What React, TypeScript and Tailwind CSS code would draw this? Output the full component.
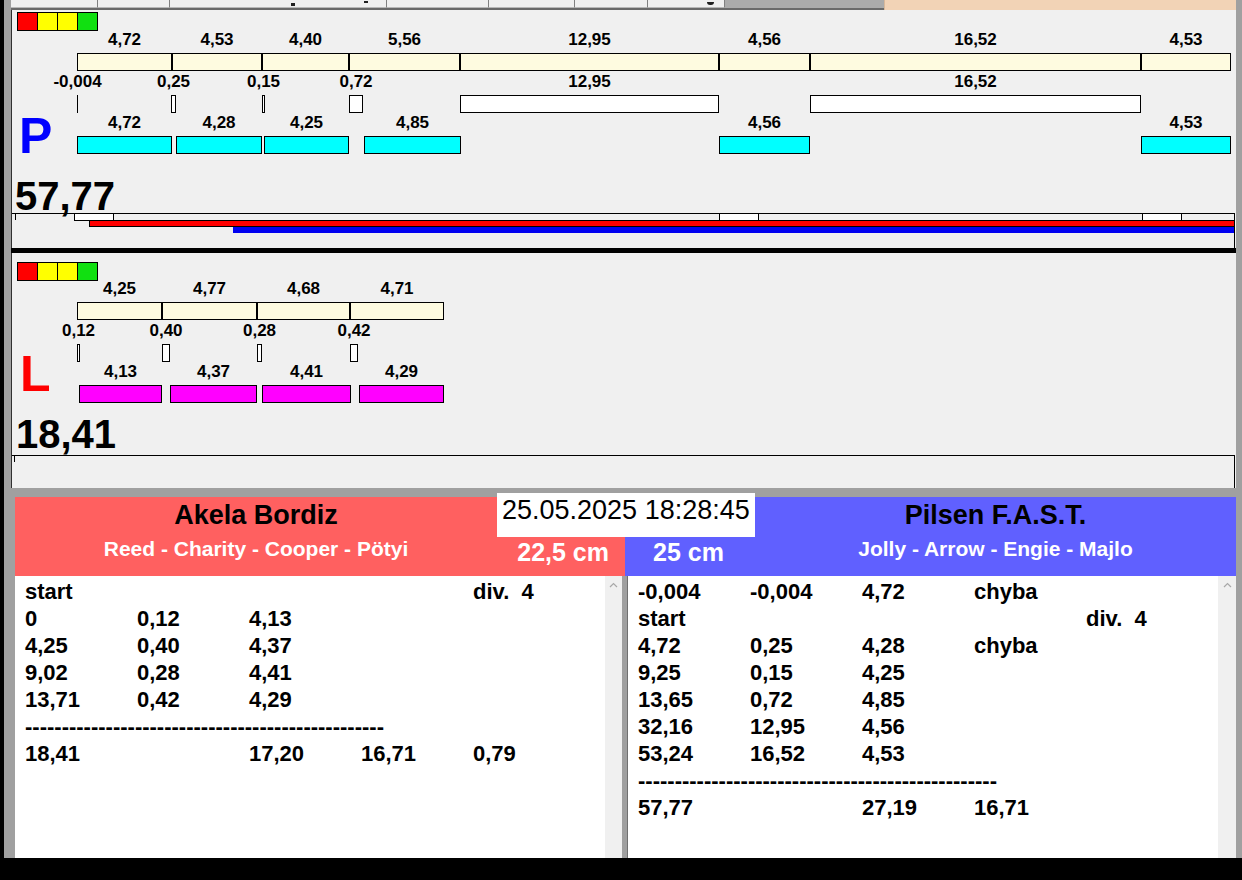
import React from 'react';

// chart coordinates are page pixels; panels start at x=12
const OX = 12;

type Seg = [number, number, string];

const pRow1: Seg[] = [
  [77, 172, '4,72'], [172, 262, '4,53'], [262, 349, '4,40'], [349, 460, '5,56'],
  [460, 719, '12,95'], [719, 810, '4,56'], [810, 1141, '16,52'], [1141, 1231, '4,53'],
];
const pRow2: Seg[] = [
  [77, 78, '-0,004'], [171, 176, '0,25'], [262, 265, '0,15'], [349, 363, '0,72'],
  [460, 719, '12,95'], [810, 1141, '16,52'],
];
const pRow3: Seg[] = [
  [77, 172, '4,72'], [176, 262, '4,28'], [264, 349, '4,25'], [364, 461, '4,85'],
  [719, 810, '4,56'], [1141, 1231, '4,53'],
];

const lRow1: Seg[] = [[77, 162, '4,25'], [162, 257, '4,77'], [257, 350, '4,68'], [350, 444, '4,71']];
const lRow2: Seg[] = [[77, 80, '0,12'], [162, 170, '0,40'], [257, 262, '0,28'], [350, 358, '0,42']];
const lRow3: Seg[] = [[79, 162, '4,13'], [170, 257, '4,37'], [262, 351, '4,41'], [359, 444, '4,29']];

const DASH = '-------------------------------------------------';

const leftRows: string[][] = [
  ['start', '', '', '', 'div.  4'],
  ['0', '0,12', '4,13'],
  ['4,25', '0,40', '4,37'],
  ['9,02', '0,28', '4,41'],
  ['13,71', '0,42', '4,29'],
  [DASH],
  ['18,41', '', '17,20', '16,71', '0,79'],
];

const rightRows: string[][] = [
  ['-0,004', '-0,004', '4,72', 'chyba'],
  ['start', '', '', '', 'div.  4'],
  ['4,72', '0,25', '4,28', 'chyba'],
  ['9,25', '0,15', '4,25'],
  ['13,65', '0,72', '4,85'],
  ['32,16', '12,95', '4,56'],
  ['53,24', '16,52', '4,53'],
  [DASH],
  ['57,77', '', '27,19', '16,71'],
];

function BarRow({ top, segs, fill }: { top: number; segs: Seg[]; fill: string }) {
  return (
    <>
      {segs.map(([x0, x1, label], i) => {
        const w = x1 - x0;
        const c = (x0 + x1) / 2 - OX;
        return (
          <React.Fragment key={i}>
            <div
              className="absolute w-[100px] text-center text-[17px] font-bold leading-[20px] text-black whitespace-nowrap"
              style={{ left: c - 50, top: top - 23 }}
            >
              {label}
            </div>
            <div
              className={`absolute h-[18px] ${w <= 1 ? 'bg-black' : 'border border-black ' + fill}`}
              style={{ left: x0 - OX, width: w, top }}
            />
          </React.Fragment>
        );
      })}
    </>
  );
}

function Lights({ top }: { top: number }) {
  return (
    <div className="absolute left-[5px] flex border border-black" style={{ top }}>
      <div className="w-[20px] h-[17px] bg-[#ff0000] border-r border-black" />
      <div className="w-[20px] h-[17px] bg-[#ffff00] border-r border-black" />
      <div className="w-[20px] h-[17px] bg-[#ffff00] border-r border-black" />
      <div className="w-[19px] h-[17px] bg-[#11e011]" />
    </div>
  );
}

function Box({ x0, x1, top, h }: { x0: number; x1: number; top: number; h: number }) {
  return (
    <div className="absolute border border-black bg-white" style={{ left: x0 - OX, width: x1 - x0, top, height: h }} />
  );
}

function ListPanel({ rows }: { rows: string[][] }) {
  return (
    <div className="w-[590px] h-full bg-white pl-[10px] pt-[2px] overflow-hidden">
      {rows.map((r, i) => (
        <div key={i} className="flex h-[27px] text-[22px] font-bold leading-[27px] text-black whitespace-pre">
          {r.length === 1 ? (
            <span>{r[0]}</span>
          ) : (
            r.map((c, j) => (
              <span key={j} className="w-[112px] shrink-0">{c}</span>
            ))
          )}
        </div>
      ))}
    </div>
  );
}

function ScrollBar({ w }: { w: string }) {
  return (
    <div className={`${w} h-full bg-[#f0f0f0] flex justify-center pt-[6px]`}>
      <svg width="9" height="6" viewBox="0 0 9 6">
        <path d="M1 5 L4.5 1.5 L8 5" fill="none" stroke="#a8a8a8" strokeWidth="1.2" />
      </svg>
    </div>
  );
}

export default function App() {
  return (
    <div className="w-[1242px] h-[880px] flex flex-col overflow-hidden bg-[#a0a0a0] font-['Liberation_Sans',Arial,sans-serif]">
      <div className="flex h-[858px]">
        <div className="w-[4px] bg-black" />
        <div className="w-[7px] bg-[#a0a0a0]" />

        <div className="w-[1225px] flex flex-col">
          {/* tab strip */}
          <div className="flex h-[10px]">
            <div className="flex w-[714px] border-b-2 border-[#6a6a6a] bg-white">
              <div className="w-[87px] h-full bg-[#f0f0f0] border-r border-[#808080] border-b border-b-[#b8b8b8]" />
              <div className="w-[72px] h-full bg-[#f0f0f0] border-r border-[#808080] border-b border-b-[#b8b8b8]" />
              <div className="relative w-[217px] h-full bg-[#f0f0f0] border-r border-[#808080] border-b border-b-[#b8b8b8]">
                <div className="absolute left-[121px] top-[3px] w-[4px] h-[3px] bg-[#202020]" />
              </div>
              <div className="relative w-[102px] h-full bg-[#f0f0f0] border-r border-[#808080] border-b border-b-[#b8b8b8]">
                <div className="absolute left-[-23px] top-[1px] w-[4px] h-[2px] bg-[#202020]" />
              </div>
              <div className="w-[86px] h-full bg-[#f0f0f0] border-r border-[#808080] border-b border-b-[#b8b8b8]" />
              <div className="w-[73px] h-full bg-[#f0f0f0] border-r border-[#808080] border-b border-b-[#b8b8b8]" />
              <div className="relative w-[77px] h-full bg-[#f0f0f0] border-r border-[#808080] border-b border-b-[#b8b8b8]">
                <div className="absolute left-[59px] top-[2px] w-[7px] h-[3px] rounded-b-full bg-[#202020]" />
              </div>
            </div>
            <div className="w-[159px] bg-[#ababab] border-b-2 border-[#6a6a6a]" />
            <div className="flex-1 bg-[#f2d3b6] border-l border-[#d8b89a]" />
          </div>

          {/* P panel */}
          <div className="relative h-[238px] bg-[#f0f0f0] border-l border-[#303030]">
            <Lights top={2} />
            <BarRow top={43} segs={pRow1} fill="bg-[#fefbe0]" />
            <BarRow top={85} segs={pRow2} fill="bg-white" />
            <BarRow top={126} segs={pRow3} fill="bg-[#00ffff]" />
            <div className="absolute left-[7px] top-[101px] text-[50px] font-bold leading-[50px] text-[#0000ff]">P</div>
            <div className="absolute left-[3px] top-[166px] text-[40px] font-bold leading-[40px] text-black">57,77</div>

            {/* track */}
            <div className="absolute left-0 top-[203px] w-[1222px] h-[1px] bg-black" />
            <div className="absolute left-[3px] top-[203px] w-[1px] h-[7px] bg-black" />
            <Box x0={74} x1={114} top={203} h={8} />
            <Box x0={719} x1={759} top={203} h={8} />
            <Box x0={1142} x1={1182} top={203} h={8} />
            <div className="absolute left-[77px] top-[210px] w-[1146px] h-[7px] border border-black bg-[#ff0000]" />
            <div className="absolute left-[221px] top-[217px] w-[1002px] h-[6px] bg-[#0000f0]" />
            <div className="absolute left-[1222px] top-[203px] w-[1px] h-[35px] bg-black" />
          </div>

          <div className="h-[5px] bg-black" />

          {/* L panel */}
          <div className="relative h-[235px] bg-[#f0f0f0] border-l border-[#303030]">
            <Lights top={9} />
            <BarRow top={49} segs={lRow1} fill="bg-[#fefbe0]" />
            <BarRow top={91} segs={lRow2} fill="bg-white" />
            <BarRow top={132} segs={lRow3} fill="bg-[#ff00ff]" />
            <div className="absolute left-[8px] top-[96px] text-[50px] font-bold leading-[50px] text-[#ff0000]">L</div>
            <div className="absolute left-[4px] top-[161px] text-[40px] font-bold leading-[40px] text-black">18,41</div>
            <div className="absolute left-0 top-[202px] w-[1222px] h-[1px] bg-black" />
            <div className="absolute left-[2px] top-[202px] w-[1px] h-[7px] bg-black" />
            <div className="absolute left-[1222px] top-[202px] w-[1px] h-[33px] bg-black" />
          </div>

          <div className="h-[9px] bg-[#a0a0a0]" />

          {/* result panel */}
          <div className="relative h-[361px] flex flex-col bg-[#a0a0a0] pl-[4px]">
            <div className="flex h-[79px]">
              <div className="w-[610px] bg-[#ff6060] flex flex-col">
                <div className="w-[482px] h-[36px] text-center text-[27px] font-bold leading-[36px] text-black">Akela Bordiz</div>
                <div className="flex h-[43px]">
                  <div className="w-[482px] text-center text-[21px] font-bold leading-[32px] text-white">Reed - Charity - Cooper - Pötyi</div>
                  <div className="flex-1 text-right pr-[16px] text-[25px] font-bold leading-[38px] text-white">22,5 cm</div>
                </div>
              </div>
              <div className="flex-1 bg-[#6060ff] flex flex-col">
                <div className="pl-[130px] h-[36px] text-center text-[27px] font-bold leading-[36px] text-black">Pilsen F.A.S.T.</div>
                <div className="flex h-[43px]">
                  <div className="w-[130px] pl-[28px] text-[25px] font-bold leading-[38px] text-white">25 cm</div>
                  <div className="flex-1 text-center text-[21px] font-bold leading-[32px] text-white">Jolly - Arrow - Engie - Majlo</div>
                </div>
              </div>
            </div>

            <div className="flex h-[282px]">
              <ListPanel rows={leftRows} />
              <ScrollBar w="w-[17px]" />
              <div className="w-[6px] bg-[#a0a0a0] border-r border-[#707070]" />
              <ListPanel rows={rightRows} />
              <ScrollBar w="w-[18px]" />
            </div>

            <div className="absolute left-[486px] top-[-4px] w-[258px] h-[44px] bg-white pl-[5px] pt-[2px] text-[27px] leading-[30px] text-black whitespace-nowrap">
              25.05.2025 18:28:45
            </div>
          </div>
        </div>

        <div className="w-[6px] bg-[#a0a0a0]" />
      </div>
      <div className="h-[22px] bg-black" />
    </div>
  );
}
